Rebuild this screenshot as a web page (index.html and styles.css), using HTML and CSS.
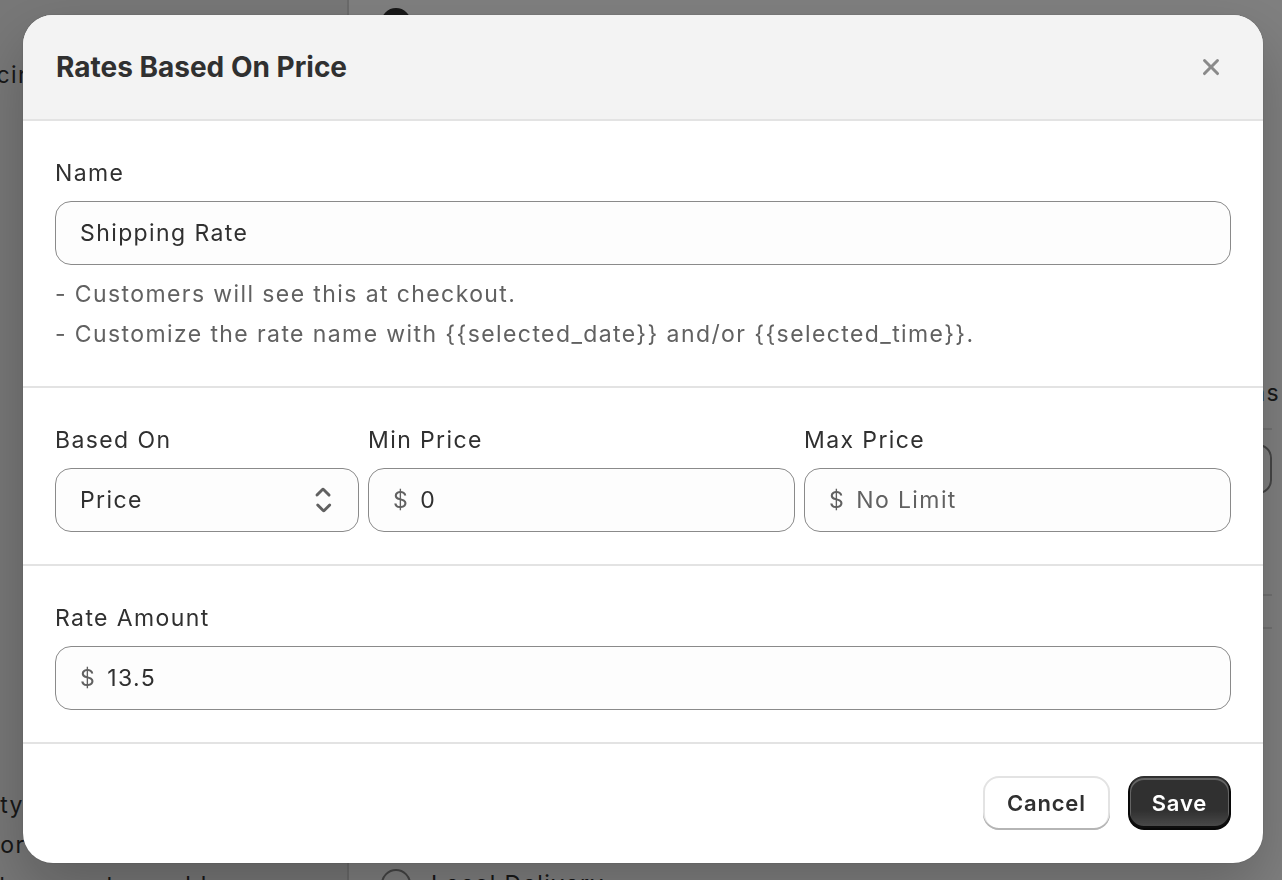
FILE: index.html
```html
<!DOCTYPE html>
<html lang="en">
<head>
<meta charset="utf-8">
<title>Rates Based On Price</title>
<link rel="stylesheet" href="styles.css">
</head>
<body>
<div class="backdrop">
  <aside class="bg-side">
    <div class="bg-side-inner">
      <p class="bg-line bg-first">Pricing</p>
      <p class="bg-line bg-ty">City</p>
      <p class="bg-line bg-or">for</p>
      <p class="bg-line bg-last">to your store address</p>
    </div>
  </aside>
  <main class="bg-main">
    <div class="bg-radio-row bg-top">
      <span class="bg-radio bg-radio-on"></span>
    </div>
    <div class="bg-block">
      <p class="bg-heading">Delivery options</p>
      <div class="bg-rule"></div>
      <div class="bg-input"></div>
      <div class="bg-rule bg-rule-low"></div>
      <div class="bg-rule bg-rule-low2"></div>
    </div>
    <div class="bg-radio-row bg-bottom">
      <span class="bg-radio"></span>
      <span class="bg-radio-label">Local Delivery</span>
    </div>
  </main>
</div>
<div class="overlay"></div>

<div class="modal" role="dialog" aria-labelledby="modal-title">
  <header class="modal-header">
    <h2 id="modal-title" class="modal-title">Rates Based On Price</h2>
    <button class="close-btn" aria-label="Close">
      <svg viewBox="0 0 20 20" width="40" height="40"><path fill="currentColor" d="M12.72 13.78a.75.75 0 1 0 1.06-1.06l-2.72-2.72 2.72-2.72a.75.75 0 0 0-1.06-1.06l-2.72 2.72-2.72-2.72a.75.75 0 0 0-1.060 1.06l2.72 2.72-2.72 2.72a.75.75 0 1 0 1.06 1.06l2.72-2.72 2.72 2.72Z"/></svg>
    </button>
  </header>

  <section class="modal-section">
    <label class="field-label">Name</label>
    <div class="input"><span class="value">Shipping Rate</span></div>
    <div class="help">
      <p>- Customers will see this at checkout.</p>
      <p>- Customize the rate name with {{selected_date}} and/or {{selected_time}}.</p>
    </div>
  </section>

  <section class="modal-section">
    <div class="grid3">
      <div class="field">
        <label class="field-label">Based On</label>
        <div class="input select">
          <span class="value">Price</span>
          <svg class="select-icon" viewBox="0 0 20 20" width="40" height="40"><path fill="currentColor" d="M10.884 4.323a1.25 1.25 0 0 0-1.768 0l-2.646 2.647a.75.75 0 0 0 1.06 1.06l2.47-2.47 2.47 2.47a.75.75 0 1 0 1.06-1.06l-2.646-2.647Z"/><path fill="currentColor" d="m11.237 15.677 2.646-2.647a.75.75 0 0 0-1.06-1.06l-2.47 2.47-2.470-2.47a.75.75 0 0 0-1.06 1.06l2.646 2.647a1.25 1.25 0 0 0 1.768 0Z"/></svg>
        </div>
      </div>
      <div class="field">
        <label class="field-label">Min Price</label>
        <div class="input"><span class="prefix">$</span><span class="value">0</span></div>
      </div>
      <div class="field">
        <label class="field-label">Max Price</label>
        <div class="input"><span class="prefix">$</span><span class="value placeholder">No Limit</span></div>
      </div>
    </div>
  </section>

  <section class="modal-section">
    <label class="field-label">Rate Amount</label>
    <div class="input"><span class="prefix">$</span><span class="value">13.5</span></div>
  </section>

  <footer class="modal-footer">
    <button class="btn btn-secondary">Cancel</button>
    <button class="btn btn-primary">Save</button>
  </footer>
</div>
</body>
</html>
```

FILE: styles.css
```css
* { box-sizing: border-box; }
html, body { margin: 0; padding: 0; }
body {
  width: 1282px;
  height: 880px;
  overflow: hidden;
  font-family: Inter, "Noto Sans", "Liberation Sans", sans-serif;
  color: #303030;
  background: #f1f1f1;
}
p { margin: 0; }

/* ---------- backdrop page ---------- */
.backdrop {
  display: flex;
  height: 880px;
  overflow: hidden;
}
.bg-side {
  width: 349px;
  flex: none;
  background: #eeeeee;
  border-right: 2px solid #d6d6d6;
  overflow: hidden;
}
.bg-side-inner {
  font-size: 23px;
  letter-spacing: 1.4px;
  line-height: 40px;
}
.bg-line { white-space: nowrap; }
.bg-first { margin-top: 55px; text-indent: -37px; }
.bg-ty { margin-top: 690px; text-indent: -25px; }
.bg-or { text-indent: -9px; }
.bg-last { text-indent: -1px; }
.bg-main {
  flex: 1;
  background: #ffffff;
  padding-left: 32px;
  padding-right: 10px;
  font-size: 23px;
  letter-spacing: 1.4px;
}
.bg-radio-row {
  display: flex;
  align-items: center;
  gap: 20px;
}
.bg-top { margin-top: 8px; height: 30px; }
.bg-radio {
  width: 30px;
  height: 30px;
  border-radius: 50%;
  border: 2px solid #8a8a8a;
  background: #fff;
}
.bg-radio-on {
  background: #303030;
  border-color: #303030;
}
.bg-block {
  margin-top: 335px;
  height: 494px;
  text-align: right;
}
.bg-heading { line-height: 40px; margin-right: -8px; }
.bg-rule { height: 2px; background: #e3e3e3; margin-top: 15px; }
.bg-input {
  margin-top: 14px;
  height: 50px;
  border: 2px solid #8a8a8a;
  border-radius: 14px;
}
.bg-rule-low { margin-top: 100px; }
.bg-rule-low2 { margin-top: 31px; }
.bg-bottom { margin-top: 2px; }

.overlay {
  position: fixed;
  inset: 0;
  background: rgba(0, 0, 0, 0.5);
}

/* ---------- modal ---------- */
.modal {
  position: fixed;
  left: 23px;
  top: 15px;
  width: 1240px;
  background: #ffffff;
  border-radius: 30px;
  overflow: hidden;
  box-shadow: 0 26px 60px rgba(0, 0, 0, 0.22), 0 0 2px rgba(0, 0, 0, 0.2);
}
.modal-header {
  height: 106px;
  background: #f3f3f3;
  border-bottom: 2px solid #e3e3e3;
  display: flex;
  align-items: center;
  justify-content: space-between;
  padding: 0 32px 0 33px;
}
.modal-title {
  margin: 0;
  font-size: 28px;
  font-weight: 650;
  color: #303030;
}
.close-btn {
  width: 40px;
  height: 40px;
  padding: 0;
  border: 0;
  background: transparent;
  color: #8a8a8a;
  display: flex;
  align-items: center;
  justify-content: center;
}
.close-btn svg { display: block; }

.modal-section {
  padding: 32px;
  border-bottom: 2px solid #e3e3e3;
  font-size: 23px;
  letter-spacing: 1.4px;
}
.field-label {
  display: block;
  line-height: 40px;
  margin-bottom: 8px;
  color: #303030;
}
.input {
  height: 64px;
  border: 1.3px solid #8a8a8a;
  border-radius: 16px;
  background: #fdfdfd;
  display: flex;
  align-items: center;
  padding: 0 24px;
  color: #303030;
}
.prefix {
  color: #616161;
  margin-right: 11px;
}
.placeholder { color: #616161; }
.select {
  justify-content: space-between;
  padding-right: 15px;
}
.select-icon {
  color: #616161;
  display: block;
}
.help {
  margin-top: 9px;
  line-height: 40px;
  color: #616161;
}
.grid3 {
  display: grid;
  grid-template-columns: 304px 1fr 1fr;
  column-gap: 9px;
}

/* ---------- footer ---------- */
.modal-footer {
  display: flex;
  justify-content: flex-end;
  gap: 18px;
  padding: 32px 32px 33px;
}
.btn {
  height: 54px;
  padding: 0 24px;
  border-radius: 16px;
  font-family: inherit;
  font-size: 22px;
  font-weight: 600;
  letter-spacing: 0.8px;
  cursor: pointer;
}
.btn-secondary {
  background: #ffffff;
  color: #303030;
  border: 0;
  box-shadow: inset 0 -2px 0 0 #b5b5b5, inset 0 0 0 2px #e3e3e3, inset 0 1px 0 3px #ffffff;
}
.btn-primary {
  color: #ffffff;
  border: 0;
  background: linear-gradient(180deg, rgba(48,48,48,0) 63%, rgba(255,255,255,0.15) 100%), #303030;
  box-shadow: inset 0 -2px 0 2px rgba(0,0,0,0.8), inset 0 0 0 2px #303030, inset 0 1px 0 3px rgba(255,255,255,0.25);
}
```
